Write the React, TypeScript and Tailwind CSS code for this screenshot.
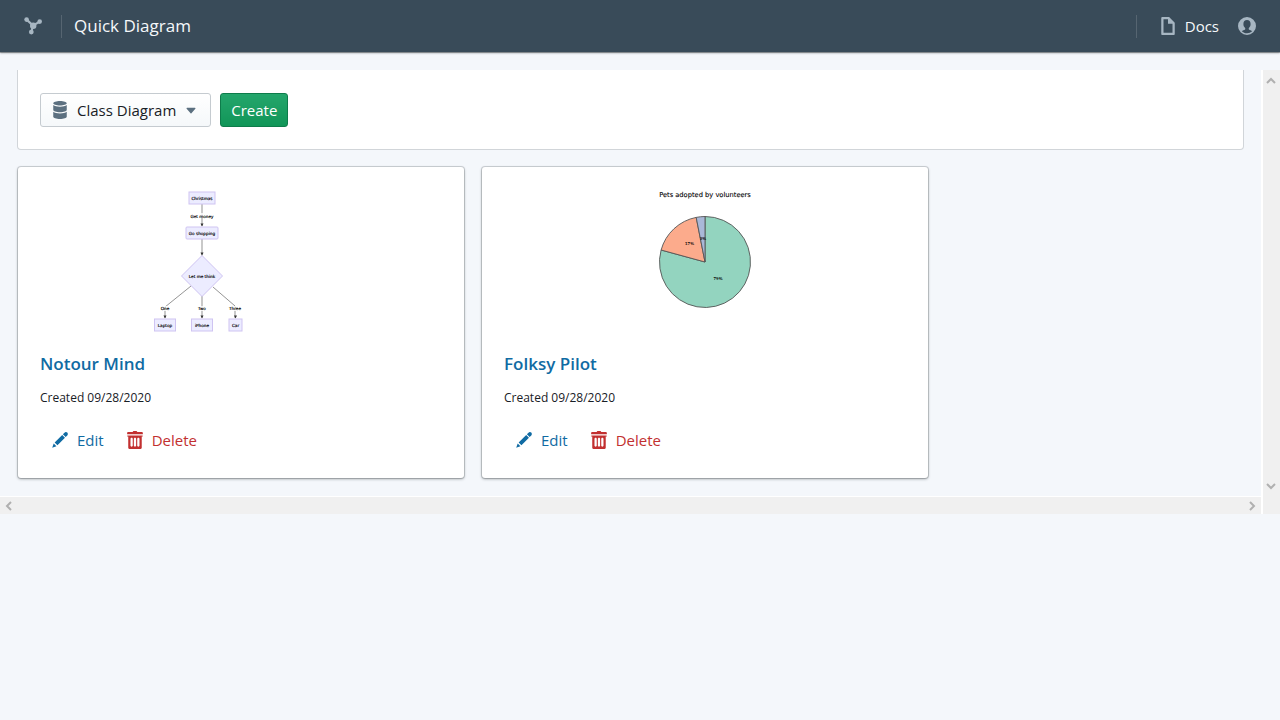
import React from "react";

type IconProps = { path: string; className?: string };

const Icon = ({ path, className = "size-[18px]" }: IconProps) => (
  <svg viewBox="0 0 16 16" className={className} fill="currentColor" fillRule="evenodd" aria-hidden="true">
    <path d={path} />
  </svg>
);

const GraphIcon = () => (
  <svg viewBox="0 0 18 18" className="size-[18px]" fill="currentColor" aria-hidden="true">
    <path d="M2.600 2.600L9 8.500L15.900 4.600M9 8.500L7.300 15" stroke="currentColor" strokeWidth="2.200" fill="none" />
    <circle cx="2.600" cy="2.600" r="2.300" />
    <circle cx="15.700" cy="4.600" r="2.300" />
    <circle cx="7.300" cy="15.100" r="2.400" />
    <circle cx="9.200" cy="8.700" r="3.200" />
  </svg>
);

const icons = {
  document: "M9 0H3c-.55 0-1 .45-1 1v14c0 .55.45 1 1 1h10c.55 0 1-.45 1-1V5L9 0zm3 14H4V2h4v4h4v8z",
  user:
    "M8 0a8 8 0 100 16A8 8 0 008 0zM8 14.400c-1.800 0-3.500-.7-4.600-1.800.6-.8 2.100-1 2.900-1.600.3-.2.300-.8 0-1.200C5.300 8.900 4.800 7.700 4.800 6.300 4.800 4.100 6 2.700 8 2.700s3.200 1.400 3.200 3.600c0 1.400-.5 2.600-1.500 3.500-.3.400-.3 1 0 1.200.8.600 2.300.8 2.900 1.600A6.500 6.500 0 018 14.400z",
  database:
    "M8 4c3.31 0 6-.9 6-2s-2.69-2-6-2C4.68 0 2 .9 2 2s2.68 2 6 2zm-6-.52V8c0 1.1 2.69 2 6 2s6-.9 6-2V3.48C12.78 4.4 10.56 5 8 5s-4.78-.6-6-1.52zm0 6V14c0 1.1 2.69 2 6 2s6-.9 6-2V9.48C12.78 10.4 10.56 11 8 11s-4.78-.6-6-1.52z",
  caret:
    "M12 6.5c0-.28-.22-.5-.5-.5h-7a.495.495 0 00-.37.83l3.5 4c.09.1.22.17.37.17s.28-.07.37-.17l3.5-4c.08-.09.13-.2.13-.33z",
  edit:
    "M3.25 10.26l2.47 2.47 6.69-6.69-2.46-2.48-6.7 6.7zM.99 14.99l3.86-1.39-2.46-2.44L.99 15zm12.25-14c-.48 0-.92.2-1.24.51l-1.44 1.44 2.47 2.47 1.44-1.44c.32-.32.51-.75.51-1.24.01-.95-.77-1.74-1.74-1.74z",
  trash:
    "M14.49 3.99h-13c-.28 0-.5.22-.5.5s.22.5.5.5h.5v10c0 .55.45 1 1 1h10c.55 0 1-.45 1-1v-10h.5c.28 0 .5-.22.5-.5s-.22-.5-.5-.5zm-8.5 9c0 .55-.45 1-1 1s-1-.45-1-1v-6c0-.55.45-1 1-1s1 .45 1 1v6zm3 0c0 .55-.45 1-1 1s-1-.45-1-1v-6c0-.55.45-1 1-1s1 .45 1 1v6zm3 0c0 .55-.45 1-1 1s-1-.45-1-1v-6c0-.55.45-1 1-1s1 .45 1 1v6zm2-12h-4c0-.55-.45-1-1-1h-2c-.55 0-1 .45-1 1h-4c-.55 0-1 .45-1 1v1h14v-1c0-.55-.45-1-1-1z",
};

const nodeBox = { fill: "#ECECFF", stroke: "#cfc4f2", strokeWidth: 1 };

const Flowchart = () => (
  <svg viewBox="150 188 182 146" className="h-[146px] w-[182px]" role="img" aria-label="Flowchart">
    <g stroke="#666" strokeWidth="0.7" fill="none">
      <path d="M202 204v22M202 239v14M202 296v22M191 286l-26 21v11M213 287l22 19v12" />
    </g>
    <g fill="#333">
      <path d="M200.500 223.500h3l-1.500 3zM200.500 252.500h3l-1.500 3.500zM200.500 315.500h3l-1.500 3zM163.500 315.500h3l-1.500 3zM234 315.500h3l-1.500 3z" />
    </g>
    <g {...nodeBox}>
      <rect x="189" y="192" width="26" height="12" />
      <rect x="186" y="227" width="32" height="12" rx="1" />
      <path d="M202 255.500l20.500 20.500-20.500 20.500-20.500-20.500z" />
      <rect x="154.500" y="319" width="21" height="12" />
      <rect x="191.500" y="319" width="21" height="12" />
      <rect x="229" y="319" width="13" height="12" />
    </g>
    <g fill="#fff" opacity="0.8">
      <rect x="191" y="213" width="22" height="5" />
      <rect x="160" y="306" width="10" height="5" />
      <rect x="197" y="306" width="10" height="5" />
      <rect x="228" y="306" width="14" height="5" />
    </g>
    <g fill="#000" fontSize="4.2" textAnchor="middle" fontFamily="DejaVu Sans, sans-serif" stroke="#000" strokeWidth="0.150">
      <text x="202" y="199.500">Christmas</text>
      <text x="202" y="217.500">Get money</text>
      <text x="202" y="235">Go shopping</text>
      <text x="202" y="277.500">Let me think</text>
      <text x="165" y="310">One</text>
      <text x="202" y="310">Two</text>
      <text x="235" y="310">Three</text>
      <text x="165" y="327">Laptop</text>
      <text x="202" y="327">iPhone</text>
      <text x="235.500" y="327">Car</text>
    </g>
  </svg>
);

const PieChart = () => (
  <svg viewBox="656 188 100 124" className="h-[124px] w-[100px]" role="img" aria-label="Pets adopted by volunteers">
    <g stroke="#555" strokeWidth="0.9" strokeLinejoin="round">
      <path d="M706 262V216.500A45.500 45.500 0 11662.100 250z" fill="#93d4bf" />
      <path d="M706 262L662.100 250A45.500 45.500 0 01697.200 217.400z" fill="#fcab8c" />
      <path d="M706 262L697.200 217.400A45.500 45.500 0 01706 216.500z" fill="#a9b8d8" />
    </g>
    <g fill="#000" textAnchor="middle" fontFamily="DejaVu Sans, sans-serif" stroke="#000" strokeWidth="0.100">
      <text x="706" y="197" fontSize="6.7">Pets adopted by volunteers</text>
      <text x="719" y="280" fontSize="4">79%</text>
      <text x="690.500" y="245" fontSize="4">17%</text>
      <text x="704" y="239.500" fontSize="4">3%</text>
    </g>
  </svg>
);

type Diagram = { title: string; created: string; preview: React.ReactNode };

const diagrams: Diagram[] = [
  { title: "Notour Mind", created: "09/28/2020", preview: <Flowchart /> },
  { title: "Folksy Pilot", created: "09/28/2020", preview: <PieChart /> },
];

const DiagramCard = ({ title, created, preview }: Diagram) => (
  <article className="w-[446px] rounded-[3px] bg-white px-[22px] pt-[17px] pb-[21px] shadow-[0_0_0_1px_rgba(16,22,26,0.15),0_1px_3px_rgba(16,22,26,0.4)]">
    <div className="flex h-[168px] justify-center pt-1">{preview}</div>
    <h2 className="text-[17px] leading-6 font-semibold text-[#106ba3]">
      <a href="#diagram">{title}</a>
    </h2>
    <p className="mt-3 text-[12px] leading-5 text-[#182026]">Created {created}</p>
    <div className="mt-[15px] flex text-[15px] text-[#106ba3]">
      <button type="button" className="flex h-[34px] items-center gap-2 px-[11px]">
        <Icon path={icons.edit} />
        Edit
      </button>
      <button type="button" className="flex h-[34px] items-center gap-2 px-[11px] text-[#c23030]">
        <Icon path={icons.trash} />
        Delete
      </button>
    </div>
  </article>
);

const ScrollArrow = ({ label, path }: { label: string; path: string }) => (
  <button type="button" aria-label={label} className="flex size-4 items-center justify-center text-[#b0b0b0]">
    <svg viewBox="0 0 10 10" className="size-[10px]" fill="none" stroke="currentColor" strokeWidth="2">
      <path d={path} />
    </svg>
  </button>
);

export default function App() {
  return (
    <div className="min-h-screen bg-[#f4f7fb] font-['Open_Sans','Noto_Sans',sans-serif] text-[#182026]">
      <header className="flex h-[52px] items-center justify-between bg-[#394b59] px-6 text-[#f5f8fa] shadow-[0_0_0_1px_rgba(16,22,26,0.3),0_1px_2px_rgba(16,22,26,0.4)]">
        <div className="flex items-center">
          <span className="text-[#a7b6c2]"><GraphIcon /></span>
          <span className="mr-3 ml-[19px] h-[23px] w-px bg-white/15" />
          <h1 className="text-[17px] leading-6">Quick Diagram</h1>
        </div>
        <nav className="flex items-center text-[15px]">
          <span className="mr-[22px] h-[23px] w-px bg-white/15" />
          <a href="#docs" className="flex items-center gap-2">
            <span className="text-[#a7b6c2]"><Icon path={icons.document} /></span>
            Docs
          </a>
          <button type="button" aria-label="Account" className="ml-[19px] text-[#a7b6c2]">
            <Icon path={icons.user} />
          </button>
        </nav>
      </header>

      <div className="mt-[18px] flex">
        <div className="min-w-0 flex-1">
          <main className="px-[18px] pb-[18px]">
            <section className="flex items-center gap-[9px] rounded-b-[3px] bg-white px-[22px] pt-[23px] pb-[22px] shadow-[0_0_0_1px_rgba(16,22,26,0.15)] [clip-path:inset(0_-2px_-2px_-2px)]">
              <button
                type="button"
                className="flex h-[34px] items-center rounded-[3px] border border-[#c5cbd0] bg-linear-to-b from-white to-[#f5f8fa] px-[10px] text-[15px]"
              >
                <span className="mr-2 text-[#5c7080]"><Icon path={icons.database} /></span>
                Class Diagram
                <span className="ml-[6px] text-[#5c7080]"><Icon path={icons.caret} /></span>
              </button>
              <button
                type="button"
                className="h-[34px] rounded-[3px] border border-[#0e7c4b] bg-linear-to-b from-[#24a66c] to-[#109658] px-[10px] text-[15px] text-white"
              >
                Create
              </button>
            </section>
            <section className="mt-[18px] flex flex-wrap gap-[18px]">
              {diagrams.map((d) => (
                <DiagramCard key={d.title} {...d} />
              ))}
            </section>
          </main>
          <div className="flex h-[18px] items-center justify-between border-t border-white bg-[#f0f0f0] px-px">
            <ScrollArrow label="Scroll left" path="M7 1L3 5l4 4" />
            <ScrollArrow label="Scroll right" path="M3 1l4 4-4 4" />
          </div>
        </div>
        <div className="flex w-[19px] flex-col items-start justify-between border-l-2 border-white bg-[#f0f0f0] pt-[3px] pb-5">
          <ScrollArrow label="Scroll up" path="M1 7l4-4 4 4" />
          <ScrollArrow label="Scroll down" path="M1 3l4 4 4-4" />
        </div>
      </div>
    </div>
  );
}
